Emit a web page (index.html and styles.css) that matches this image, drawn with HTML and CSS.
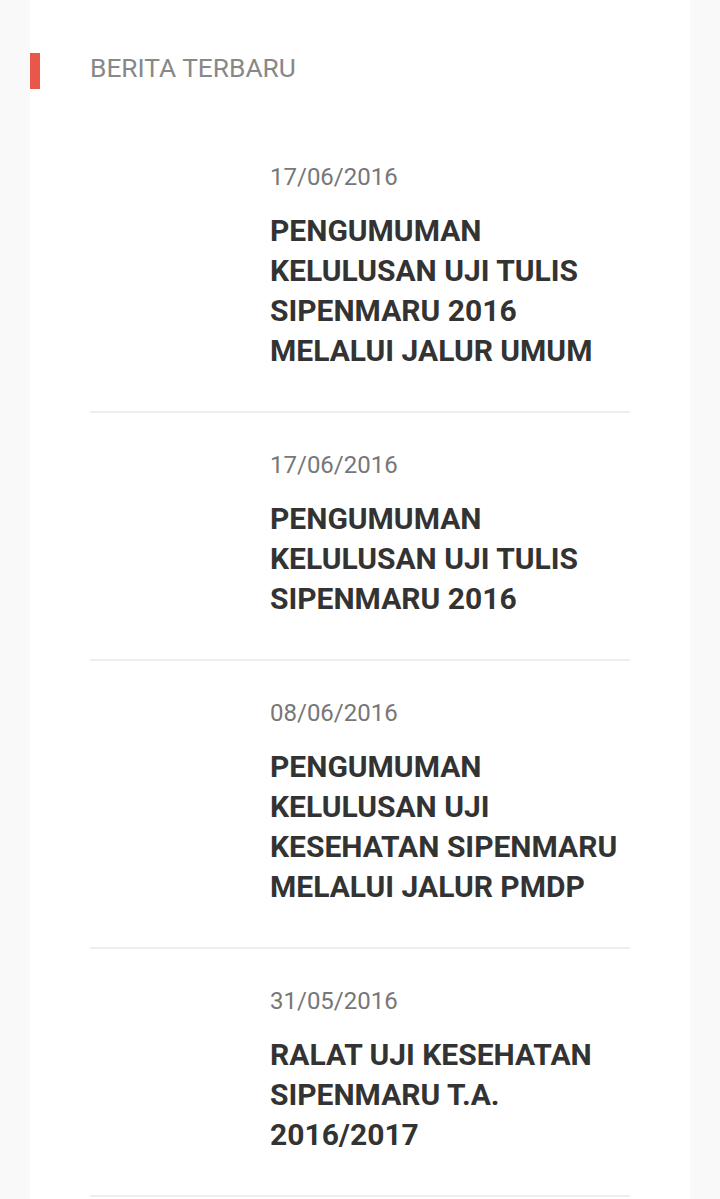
FILE: index.html
```html
<!DOCTYPE html>
<html lang="id">
  <head>
    <meta charset="UTF-8" />
    <meta name="viewport" content="width=device-width, initial-scale=1.0" />
    <title>Berita Terbaru</title>
    <link rel="stylesheet" href="styles.css">
  </head>
  <body>
    <div class="panel">
      <h3 class="panel-title">BERITA TERBARU</h3>

      <div class="news-list">
        <div class="news-item">
          <div class="news-thumb"></div>
          <div class="news-body">
            <div class="news-date">17/06/2016</div>
            <h4 class="news-title">PENGUMUMAN KELULUSAN UJI TULIS SIPENMARU 2016 MELALUI JALUR UMUM</h4>
          </div>
        </div>

        <div class="news-item">
          <div class="news-thumb"></div>
          <div class="news-body">
            <div class="news-date">17/06/2016</div>
            <h4 class="news-title">PENGUMUMAN KELULUSAN UJI TULIS SIPENMARU 2016</h4>
          </div>
        </div>

        <div class="news-item">
          <div class="news-thumb"></div>
          <div class="news-body">
            <div class="news-date">08/06/2016</div>
            <h4 class="news-title">PENGUMUMAN KELULUSAN UJI KESEHATAN SIPENMARU MELALUI JALUR PMDP</h4>
          </div>
        </div>

        <div class="news-item">
          <div class="news-thumb"></div>
          <div class="news-body">
            <div class="news-date">31/05/2016</div>
            <h4 class="news-title">RALAT UJI KESEHATAN SIPENMARU T.A. 2016/2017</h4>
          </div>
        </div>
      </div>
    </div>
  </body>
</html>
```

FILE: styles.css
```css
* {
  margin: 0;
  padding: 0;
  box-sizing: border-box;
  font-family: Roboto, "Liberation Sans", Arial, sans-serif;
}

body {
  background: #f9f9f9;
}

.panel {
  background: #fff;
  margin: 0 30px;
  padding: 0 60px;
  min-height: 1199px;
}

.panel-title {
  position: relative;
  padding-top: 52px;
  height: 89px;
  line-height: 32px;
  font-size: 26.3px;
  font-weight: 400;
  color: #888;
  margin-bottom: 72px;
}

/* red marker on the card's left edge */
.panel-title::before {
  content: "";
  position: absolute;
  left: -60px;
  top: 53px;
  width: 10px;
  height: 36px;
  background: #e8574a;
}

.news-item {
  display: grid;
  grid-template-columns: 180px 1fr;
  padding: 36px 0 40px;
  border-bottom: 2px solid #eee;
}

.news-item:first-child {
  padding-top: 0;
}

.news-date {
  font-size: 24px;
  line-height: 32px;
  color: #777;
  margin-bottom: 18px;
}

.news-title {
  font-size: 30px;
  line-height: 40px;
  font-weight: 700;
  color: #333;
}
```
